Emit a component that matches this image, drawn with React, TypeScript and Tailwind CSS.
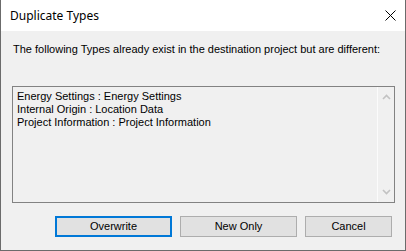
import * as React from "react";

const items = [
  "Energy Settings : Energy Settings",
  "Internal Origin : Location Data",
  "Project Information : Project Information",
];

function Chevron({ up }: { up?: boolean }) {
  return (
    <svg width="9" height="6" viewBox="0 0 9 6" className="block">
      <path
        d={up ? "M1 5 L4.5 1.5 L8 5" : "M1 1 L4.5 4.5 L8 1"}
        fill="none"
        stroke="#c2c2c2"
        strokeWidth="1.6"
      />
    </svg>
  );
}

function DialogButton({ label, primary, width }: { label: string; primary?: boolean; width: string }) {
  return (
    <button
      className={`${width} h-[21px] flex items-center justify-center bg-[#e1e1e1] text-[11px] text-black ${
        primary ? "border-2 border-[#0078d7]" : "border border-[#adadad]"
      }`}
    >
      {label}
    </button>
  );
}

export default function App() {
  return (
    <div
      className="w-[406px] h-[251px] flex flex-col bg-[#f0f0f0] border-x border-b border-[#6b6b6b]"
      style={{ fontFamily: "'Liberation Sans', Arial, sans-serif" }}
    >
      {/* title bar */}
      <div className="h-[31px] shrink-0 bg-white flex items-center justify-between pl-[9px] pr-[9px]">
        <span className="text-[12px] text-black" style={{ fontFamily: "'Noto Sans', sans-serif" }}>
          Duplicate Types
        </span>
        <svg width="11" height="11" viewBox="0 0 11 11" className="mb-[1px]">
          <path d="M0.5 0.5 L10.5 10.5 M10.5 0.5 L0.5 10.5" stroke="#000" strokeWidth="1" />
        </svg>
      </div>

      <div className="flex-1 flex flex-col px-[11px]">
        <p className="mt-[12px] text-[11px] leading-[13px] text-black pl-[1px]">
          The following Types already exist in the destination project but are different:
        </p>

        {/* list box */}
        <div className="mt-[30px] h-[117px] mr-[-1px] border border-[#828282] flex">
          <div className="flex-1 pt-[3px] pl-[4px] text-[11px] leading-[13px] text-black">
            {items.map((t) => (
              <div key={t}>{t}</div>
            ))}
          </div>
          <div className="w-[17px] border-l border-[#fbfbfb] flex flex-col items-center justify-between py-[7px]">
            <Chevron up />
            <Chevron />
          </div>
        </div>

        <div className="mt-[13px] flex justify-end gap-[8px] mr-[2px]">
          <DialogButton label="Overwrite" primary width="w-[117px]" />
          <DialogButton label="New Only" width="w-[117px]" />
          <DialogButton label="Cancel" width="w-[87px]" />
        </div>
      </div>
    </div>
  );
}
